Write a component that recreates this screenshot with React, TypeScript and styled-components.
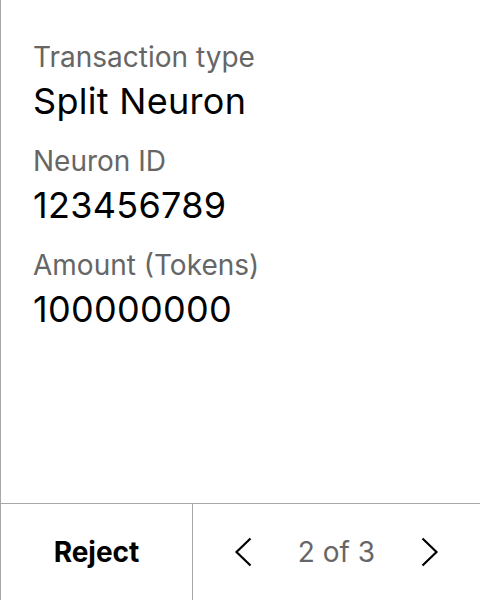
import React from "react";
import styled, { createGlobalStyle } from "styled-components";

const Global = createGlobalStyle`
  html, body { margin: 0; padding: 0; background: #fff; }
  body { font-family: Inter, "Noto Sans", sans-serif; }
`;

const Screen = styled.div`
  width: 480px;
  height: 600px;
  box-sizing: border-box;
  border-left: 1px solid #a8a8a8;
  display: flex;
  flex-direction: column;
  background: #fff;
`;

const Content = styled.div`
  flex: 1;
  padding: 40px 32px 0 32px;
  display: flex;
  flex-direction: column;
  gap: 21px;
`;

const Field = styled.div`
  display: flex;
  flex-direction: column;
  gap: 5px;
`;

const Label = styled.div`
  font-size: 28px;
  line-height: 34px;
  color: #666;
`;

const Value = styled.div`
  font-size: 36px;
  line-height: 44px;
  color: #000;
  letter-spacing: 0.3px;
`;

const Footer = styled.div`
  height: 97px;
  box-sizing: border-box;
  border-top: 1px solid #a8a8a8;
  display: flex;
`;

const RejectButton = styled.button`
  width: 192px;
  border: none;
  border-right: 1px solid #a8a8a8;
  background: transparent;
  font-family: Inter, sans-serif;
  font-weight: 700;
  font-size: 28px;
  color: #000;
  padding: 0;
`;

const Pager = styled.div`
  flex: 1;
  display: flex;
  align-items: center;
  justify-content: space-between;
  padding: 0 41px 0 41px;
`;

const NavButton = styled.button`
  border: none;
  background: transparent;
  padding: 0;
  width: 18px;
  height: 30px;
  display: flex;
  align-items: center;
  justify-content: center;
`;

const PageText = styled.span`
  font-size: 28px;
  color: #666;
`;

const Chevron = ({ dir }: { dir: "left" | "right" }) => (
  <svg width="18" height="30" viewBox="0 0 18 30">
    <path
      d={dir === "left" ? "M16.5 1.5 L2.5 15 L16.5 28.5" : "M1.5 1.5 L15.5 15 L1.5 28.5"}
      fill="none"
      stroke="#000"
      strokeWidth="2.2"
    />
  </svg>
);

export default function App() {
  return (
    <>
      <Global />
      <Screen>
        <Content>
          <Field>
            <Label>Transaction type</Label>
            <Value>Split Neuron</Value>
          </Field>
          <Field>
            <Label>Neuron ID</Label>
            <Value>123456789</Value>
          </Field>
          <Field>
            <Label>Amount (Tokens)</Label>
            <Value>100000000</Value>
          </Field>
        </Content>
        <Footer>
          <RejectButton>Reject</RejectButton>
          <Pager>
            <NavButton><Chevron dir="left" /></NavButton>
            <PageText>2 of 3</PageText>
            <NavButton><Chevron dir="right" /></NavButton>
          </Pager>
        </Footer>
      </Screen>
    </>
  );
}
